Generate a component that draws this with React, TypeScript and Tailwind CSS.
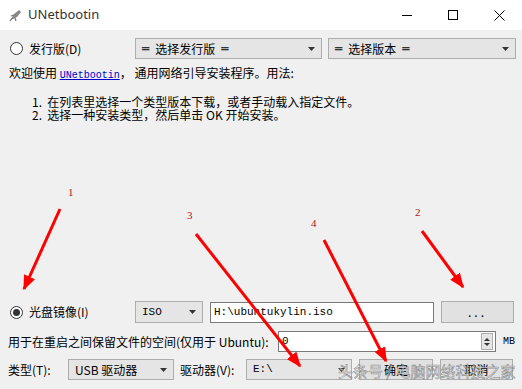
import React from "react";

const cjk = { fontFamily: '"SimSun","Noto Sans CJK SC",sans-serif' };
const mono = { fontFamily: '"Liberation Mono","Noto Sans CJK SC",monospace' };
const box = { fontFamily: '"DejaVu Sans Mono",monospace' };

function Arrow() {
  return (
    <svg width="7" height="4" viewBox="0 0 7 4">
      <polygon points="0,0 7,0 3.5,4" fill="#333" />
    </svg>
  );
}

function Combo({ w, children }: { w: string; children: React.ReactNode }) {
  return (
    <div className={`${w} h-full flex items-center justify-between border border-[#adadad] bg-[#e5e5e5] pl-[6px] pr-[6px]`}>
      <span className="whitespace-nowrap flex items-center">{children}</span>
      <Arrow />
    </div>
  );
}

function Radio({ on }: { on?: boolean }) {
  return (
    <div className="w-[13px] h-[13px] rounded-full border border-[#333] bg-white flex items-center justify-center">
      {on && <div className="w-[7px] h-[7px] rounded-full bg-[#333]" />}
    </div>
  );
}

export default function App() {
  return (
    <div className="relative w-[522px] h-[389px] overflow-hidden bg-[#f0f0f0] text-[12px] text-black" style={cjk}>
      {/* title bar */}
      <div className="h-[30px] bg-white flex items-center">
        <svg className="ml-[9px]" width="13" height="13" viewBox="0 0 13 13">
          <path d="M2 11 L5 5 L10 1 L12 3 L8 8 Z" fill="#888" />
          <path d="M1 12 L4 8 M2 7 L5 6 M6 9 L7 12" stroke="#777" strokeWidth="1.2" />
        </svg>
        <span className="ml-[6px] text-[13px] text-[#333]" style={{ fontFamily: '"Noto Sans","Open Sans",sans-serif' }}>UNetbootin</span>
        <div className="ml-auto flex items-center h-full">
          <div className="w-[46px] h-full flex items-center justify-center">
            <div className="w-[10px] h-px bg-black" />
          </div>
          <div className="w-[46px] h-full flex items-center justify-center">
            <div className="w-[10px] h-[10px] border border-black" />
          </div>
          <div className="w-[46px] h-full flex items-center justify-center">
            <svg width="11" height="11" viewBox="0 0 11 11">
              <path d="M0.5 0.5 L10.5 10.5 M10.5 0.5 L0.5 10.5" stroke="#000" strokeWidth="1" />
            </svg>
          </div>
        </div>
      </div>

      {/* body */}
      <div className="flex flex-col h-[359px]">
        <div className="flex items-center h-[21px] mt-[8px] pl-[10px]">
          <Radio />
          <span className="ml-[6px] w-[106px]">发行版(D)</span>
          <Combo w="w-[187px]">
            <span style={box}>═</span>
            <span className="ml-[6px] mr-[6px]">选择发行版</span>
            <span style={box}>═</span>
          </Combo>
          <div className="w-[6px]" />
          <Combo w="w-[188px]">
            <span style={box}>═</span>
            <span className="ml-[6px] mr-[6px]">选择版本</span>
            <span style={box}>═</span>
          </Combo>
        </div>

        <div className="mt-[7px] pl-[9px] leading-[14px]">
          欢迎使用 <span className="text-[#0000cc] underline text-[10px]" style={mono}>UNetbootin</span>， 通用网络引导安装程序。用法:
        </div>
        <div className="mt-[12px] pl-[32px] leading-[13px]">
          <div>1.&nbsp; 在列表里选择一个类型版本下载，或者手动载入指定文件。</div>
          <div>2.&nbsp; 选择一种安装类型，然后单击 OK 开始安装。</div>
        </div>

        <div className="flex-1" />

        <div className="flex items-center h-[22px] pl-[10px]">
          <Radio on />
          <span className="ml-[6px] w-[106px]">光盘镜像(I)</span>
          <Combo w="w-[68px]"><span style={mono} className="text-[11px]">ISO</span></Combo>
          <div className="ml-[7px] w-[224px] h-[21px] border border-[#7a7a7a] bg-white flex items-center pl-[3px]">
            <span style={mono} className="text-[11px]">H:\ubuntukylin.iso</span>
          </div>
          <div className="ml-[7px] w-[73px] h-[22px] border border-[#adadad] bg-[#e1e1e1] flex items-center justify-center tracking-[3px]">...</div>
        </div>

        <div className="flex items-center h-[21px] mt-[8px] pl-[8px]">
          <span className="w-[270px] whitespace-nowrap">用于在重启之间保留文件的空间(仅用于 Ubuntu):</span>
          <div className="w-[218px] h-[21px] border border-[#7a7a7a] bg-white flex items-center justify-between pl-[3px] pr-[2px]">
            <span style={mono} className="text-[11px]">0</span>
            <div className="w-[12px] h-[17px] border border-[#adadad] bg-[#e5e5e5] flex flex-col items-center justify-center gap-[2px]">
              <svg width="6" height="3" viewBox="0 0 6 3"><polygon points="0,3 6,3 3,0" fill="#333" /></svg>
              <svg width="6" height="3" viewBox="0 0 6 3"><polygon points="0,0 6,0 3,3" fill="#333" /></svg>
            </div>
          </div>
          <span className="ml-[7px] text-[10px]" style={mono}>MB</span>
        </div>

        <div className="flex items-center h-[21px] mt-[7px] mb-[9px] pl-[8px]">
          <span className="w-[60px]">类型(T):</span>
          <Combo w="w-[106px]">USB 驱动器</Combo>
          <span className="ml-[6px] w-[66px]">驱动器(V):</span>
          <Combo w="w-[106px]"><span style={mono} className="text-[11px]">E:\</span></Combo>
          <div className="ml-[7px] w-[74px] h-[21px] border border-[#adadad] bg-[#e1e1e1] flex items-center justify-center">确定</div>
          <div className="ml-[7px] w-[73px] h-[21px] border border-[#adadad] bg-[#e1e1e1] flex items-center justify-center">取消</div>
        </div>
      </div>

      {/* annotation arrows */}
      <svg className="absolute left-0 top-0 pointer-events-none" width="522" height="389" viewBox="0 0 522 389">
        <defs>
          <marker id="ah" markerWidth="5" markerHeight="4" refX="4.5" refY="2" orient="auto" markerUnits="strokeWidth">
            <polygon points="0,0 5,2 0,4" fill="#ff0000" />
          </marker>
        </defs>
        <g stroke="#ff0000" strokeWidth="3" fill="none" markerEnd="url(#ah)">
          <line x1="60" y1="209" x2="24" y2="289" />
          <line x1="196" y1="234" x2="300" y2="366" />
          <line x1="324" y1="240" x2="386" y2="361" />
          <line x1="422" y1="231" x2="463" y2="287" />
        </g>
        <g fill="#b5121b" fontSize="11" fontFamily="Liberation Serif, serif">
          <text x="68" y="196">1</text>
          <text x="187" y="219">3</text>
          <text x="311" y="227">4</text>
          <text x="415" y="216">2</text>
        </g>
      </svg>

      {/* watermark */}
      <div
        className="absolute left-[338px] top-[362px] text-[15px] leading-[18px] text-white/80 whitespace-nowrap [-webkit-text-stroke:0.6px_rgba(90,90,90,0.7)]"
        style={{ fontFamily: '"Noto Sans CJK SC",sans-serif' }}
      >
        头条号 / 电脑网络科技之家
      </div>
    </div>
  );
}
